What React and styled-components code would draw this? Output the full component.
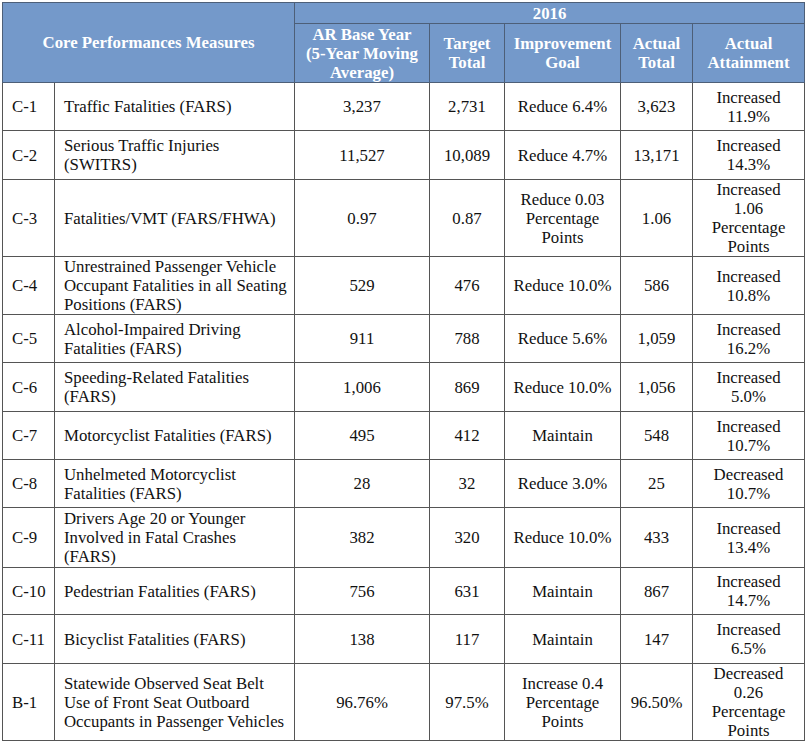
import React from 'react';
import styled, { createGlobalStyle } from 'styled-components';

const GlobalStyle = createGlobalStyle`
  html, body {
    margin: 0;
    padding: 0;
    background: #ffffff;
  }
`;

const Page = styled.div`
  padding: 2px;
  font-family: 'Liberation Serif', 'Times New Roman', serif;
  color: #111;
`;

const Table = styled.table`
  width: 802px;
  border-collapse: collapse;
  table-layout: fixed;
  font-size: 16.8px;
  line-height: 19px;
  border: 1px solid #3a3a3a;
`;

const HeadCell = styled.th`
  background-color: #7499ca;
  color: #ffffff;
  font-weight: bold;
  text-align: center;
  vertical-align: middle;
  padding: 0 2px;
  border: 1px solid #4d5f78;
  white-space: nowrap;
`;

const Row = styled.tr`
  height: ${props => props.h}px;
`;

const Cell = styled.td`
  border: 1px solid #555;
  vertical-align: middle;
  text-align: ${props => props.left ? 'left' : 'center'};
  padding: ${props => props.left ? '0 6px 0 9px' : '0 1px'};
  white-space: nowrap;
`;

const rows = [
  { code: 'C-1', name: ['Traffic Fatalities (FARS)'], base: '3,237', target: '2,731', goal: ['Reduce 6.4%'], actual: '3,623', att: ['Increased', '11.9%'], h: 48 },
  { code: 'C-2', name: ['Serious Traffic Injuries', '(SWITRS)'], base: '11,527', target: '10,089', goal: ['Reduce 4.7%'], actual: '13,171', att: ['Increased', '14.3%'], h: 49 },
  { code: 'C-3', name: ['Fatalities/VMT (FARS/FHWA)'], base: '0.97', target: '0.87', goal: ['Reduce 0.03', 'Percentage', 'Points'], actual: '1.06', att: ['Increased', '1.06', 'Percentage', 'Points'], h: 77 },
  { code: 'C-4', name: ['Unrestrained Passenger Vehicle', 'Occupant Fatalities in all Seating', 'Positions (FARS)'], base: '529', target: '476', goal: ['Reduce 10.0%'], actual: '586', att: ['Increased', '10.8%'], h: 58 },
  { code: 'C-5', name: ['Alcohol-Impaired Driving', 'Fatalities (FARS)'], base: '911', target: '788', goal: ['Reduce 5.6%'], actual: '1,059', att: ['Increased', '16.2%'], h: 48 },
  { code: 'C-6', name: ['Speeding-Related Fatalities', '(FARS)'], base: '1,006', target: '869', goal: ['Reduce 10.0%'], actual: '1,056', att: ['Increased', '5.0%'], h: 49 },
  { code: 'C-7', name: ['Motorcyclist Fatalities (FARS)'], base: '495', target: '412', goal: ['Maintain'], actual: '548', att: ['Increased', '10.7%'], h: 48 },
  { code: 'C-8', name: ['Unhelmeted Motorcyclist', 'Fatalities (FARS)'], base: '28', target: '32', goal: ['Reduce 3.0%'], actual: '25', att: ['Decreased', '10.7%'], h: 48 },
  { code: 'C-9', name: ['Drivers Age 20 or Younger', 'Involved in Fatal Crashes', '(FARS)'], base: '382', target: '320', goal: ['Reduce 10.0%'], actual: '433', att: ['Increased', '13.4%'], h: 60 },
  { code: 'C-10', name: ['Pedestrian Fatalities (FARS)'], base: '756', target: '631', goal: ['Maintain'], actual: '867', att: ['Increased', '14.7%'], h: 47 },
  { code: 'C-11', name: ['Bicyclist Fatalities (FARS)'], base: '138', target: '117', goal: ['Maintain'], actual: '147', att: ['Increased', '6.5%'], h: 49 },
  { code: 'B-1', name: ['Statewide Observed Seat Belt', 'Use of Front Seat Outboard', 'Occupants in Passenger Vehicles'], base: '96.76%', target: '97.5%', goal: ['Increase 0.4', 'Percentage', 'Points'], actual: '96.50%', att: ['Decreased', '0.26', 'Percentage', 'Points'], h: 77 },
];

const Lines = ({ items }) => items.map((line, i) => (
  <React.Fragment key={i}>
    {i > 0 && <br />}
    {line}
  </React.Fragment>
));

export default function App() {
  return (
    <Page>
      <GlobalStyle />
      <Table>
        <colgroup>
          <col style={{ width: 52 }} />
          <col style={{ width: 240 }} />
          <col style={{ width: 135 }} />
          <col style={{ width: 75 }} />
          <col style={{ width: 116 }} />
          <col style={{ width: 72 }} />
          <col style={{ width: 112 }} />
        </colgroup>
        <thead>
          <Row h={21}>
            <HeadCell colSpan={2} rowSpan={2}>Core Performances Measures</HeadCell>
            <HeadCell colSpan={5}>2016</HeadCell>
          </Row>
          <Row h={59}>
            <HeadCell>AR Base Year<br />(5-Year Moving<br />Average)</HeadCell>
            <HeadCell>Target<br />Total</HeadCell>
            <HeadCell>Improvement<br />Goal</HeadCell>
            <HeadCell>Actual<br />Total</HeadCell>
            <HeadCell>Actual<br />Attainment</HeadCell>
          </Row>
        </thead>
        <tbody>
          {rows.map(r => (
            <Row key={r.code} h={r.h}>
              <Cell left>{r.code}</Cell>
              <Cell left><Lines items={r.name} /></Cell>
              <Cell>{r.base}</Cell>
              <Cell>{r.target}</Cell>
              <Cell><Lines items={r.goal} /></Cell>
              <Cell>{r.actual}</Cell>
              <Cell><Lines items={r.att} /></Cell>
            </Row>
          ))}
        </tbody>
      </Table>
    </Page>
  );
}
